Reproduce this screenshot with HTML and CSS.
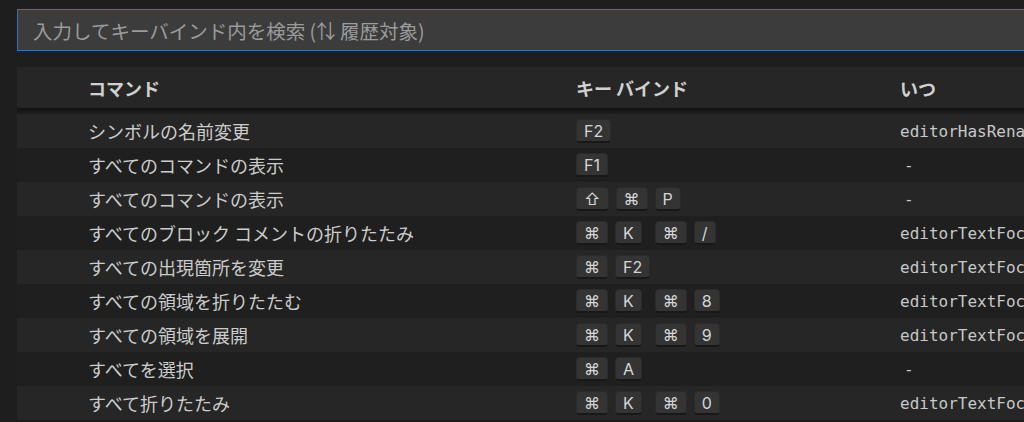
FILE: index.html
```html
<!DOCTYPE html>
<html lang="ja">
<head>
    <meta charset="UTF-8">
    <meta name="viewport" content="width=device-width, initial-scale=1.0">
    <title>キーボード ショートカット</title>
    <link rel="stylesheet" href="styles.css">
</head>
<body>
    <div class="editor">
        <div class="search">
            <span class="placeholder">入力してキーバインド内を検索 (⇅ 履歴対象)</span>
        </div>

        <div class="table">
            <div class="head">
                <div class="col-command">コマンド</div>
                <div class="col-keys">キー バインド</div>
                <div class="col-when">いつ</div>
            </div>
            <div class="head-shadow"></div>

            <div class="row">
                <div class="col-command">シンボルの名前変更</div>
                <div class="col-keys"><span class="key">F2</span></div>
                <div class="col-when">editorHasRenameProvider &amp;&amp; editorTextFocus &amp;&amp; !editorReadonly</div>
            </div>
            <div class="row">
                <div class="col-command">すべてのコマンドの表示</div>
                <div class="col-keys"><span class="key">F1</span></div>
                <div class="col-when dash">-</div>
            </div>
            <div class="row">
                <div class="col-command">すべてのコマンドの表示</div>
                <div class="col-keys">
                    <span class="chord"><span class="key">⇧</span><span class="key">⌘</span><span class="key">P</span></span>
                </div>
                <div class="col-when dash">-</div>
            </div>
            <div class="row">
                <div class="col-command">すべてのブロック コメントの折りたたみ</div>
                <div class="col-keys">
                    <span class="chord"><span class="key">⌘</span><span class="key">K</span></span>
                    <span class="chord"><span class="key">⌘</span><span class="key">/</span></span>
                </div>
                <div class="col-when">editorTextFocus &amp;&amp; foldingEnabled</div>
            </div>
            <div class="row">
                <div class="col-command">すべての出現箇所を変更</div>
                <div class="col-keys">
                    <span class="chord"><span class="key">⌘</span><span class="key">F2</span></span>
                </div>
                <div class="col-when">editorTextFocus &amp;&amp; !editorReadonly</div>
            </div>
            <div class="row">
                <div class="col-command">すべての領域を折りたたむ</div>
                <div class="col-keys">
                    <span class="chord"><span class="key">⌘</span><span class="key">K</span></span>
                    <span class="chord"><span class="key">⌘</span><span class="key">8</span></span>
                </div>
                <div class="col-when">editorTextFocus &amp;&amp; foldingEnabled</div>
            </div>
            <div class="row">
                <div class="col-command">すべての領域を展開</div>
                <div class="col-keys">
                    <span class="chord"><span class="key">⌘</span><span class="key">K</span></span>
                    <span class="chord"><span class="key">⌘</span><span class="key">9</span></span>
                </div>
                <div class="col-when">editorTextFocus &amp;&amp; foldingEnabled</div>
            </div>
            <div class="row">
                <div class="col-command">すべてを選択</div>
                <div class="col-keys">
                    <span class="chord"><span class="key">⌘</span><span class="key">A</span></span>
                </div>
                <div class="col-when dash">-</div>
            </div>
            <div class="row">
                <div class="col-command">すべて折りたたみ</div>
                <div class="col-keys">
                    <span class="chord"><span class="key">⌘</span><span class="key">K</span></span>
                    <span class="chord"><span class="key">⌘</span><span class="key">0</span></span>
                </div>
                <div class="col-when">editorTextFocus &amp;&amp; foldingEnabled</div>
            </div>
        </div>
    </div>
</body>
</html>
```

FILE: styles.css
```css
html, body {
    margin: 0;
    height: 100%;
    overflow: hidden;
}
body {
    background-color: #1e1e1e;
    color: #cccccc;
    font-family: "Noto Sans CJK JP", "Noto Sans", sans-serif;
}
.editor {
    width: 1120px;
    padding: 9px 0 0 17px;
}
.search {
    height: 42px;
    box-sizing: border-box;
    border: 1px solid #3574c0;
    background-color: #3c3c3c;
    display: flex;
    align-items: center;
    padding-left: 15px;
}
.placeholder {
    font-size: 19.5px;
    color: #9b9b9b;
    white-space: nowrap;
}
.table {
    margin-top: 16px;
}
.head, .row {
    display: grid;
    grid-template-columns: 488px 324px 1fr;
    align-items: center;
    padding-left: 71px;
    white-space: nowrap;
}
.head {
    height: 41px;
    background-color: #262626;
    font-size: 18px;
    font-weight: bold;
    color: #d0d0d0;
}
.head-shadow {
    height: 6px;
    background: linear-gradient(#131313, #1e1e1e);
}
.row {
    height: 34px;
    font-size: 18px;
    background-color: #1f1f1f;
}
.row:nth-of-type(odd) {
    background-color: #262626;
}
.col-when {
    overflow: hidden;
}
.row .col-when {
    font-family: "DejaVu Sans Mono", monospace;
    font-size: 16px;
    color: #c8c8c8;
}
.row .dash {
    padding-left: 4px;
}
.col-keys {
    display: flex;
    align-items: center;
    gap: 13px;
}
.chord {
    display: flex;
    gap: 7px;
}
.key {
    display: inline-flex;
    align-items: center;
    justify-content: center;
    height: 24px;
    box-sizing: border-box;
    padding: 0 7px;
    border: 1px solid #2b2b2b;
    border-bottom: 2px solid #181818;
    border-radius: 4px;
    background-color: #343434;
    font-family: "Inter", "DejaVu Sans", sans-serif;
    font-size: 16px;
    color: #d6d6d6;
}
```
